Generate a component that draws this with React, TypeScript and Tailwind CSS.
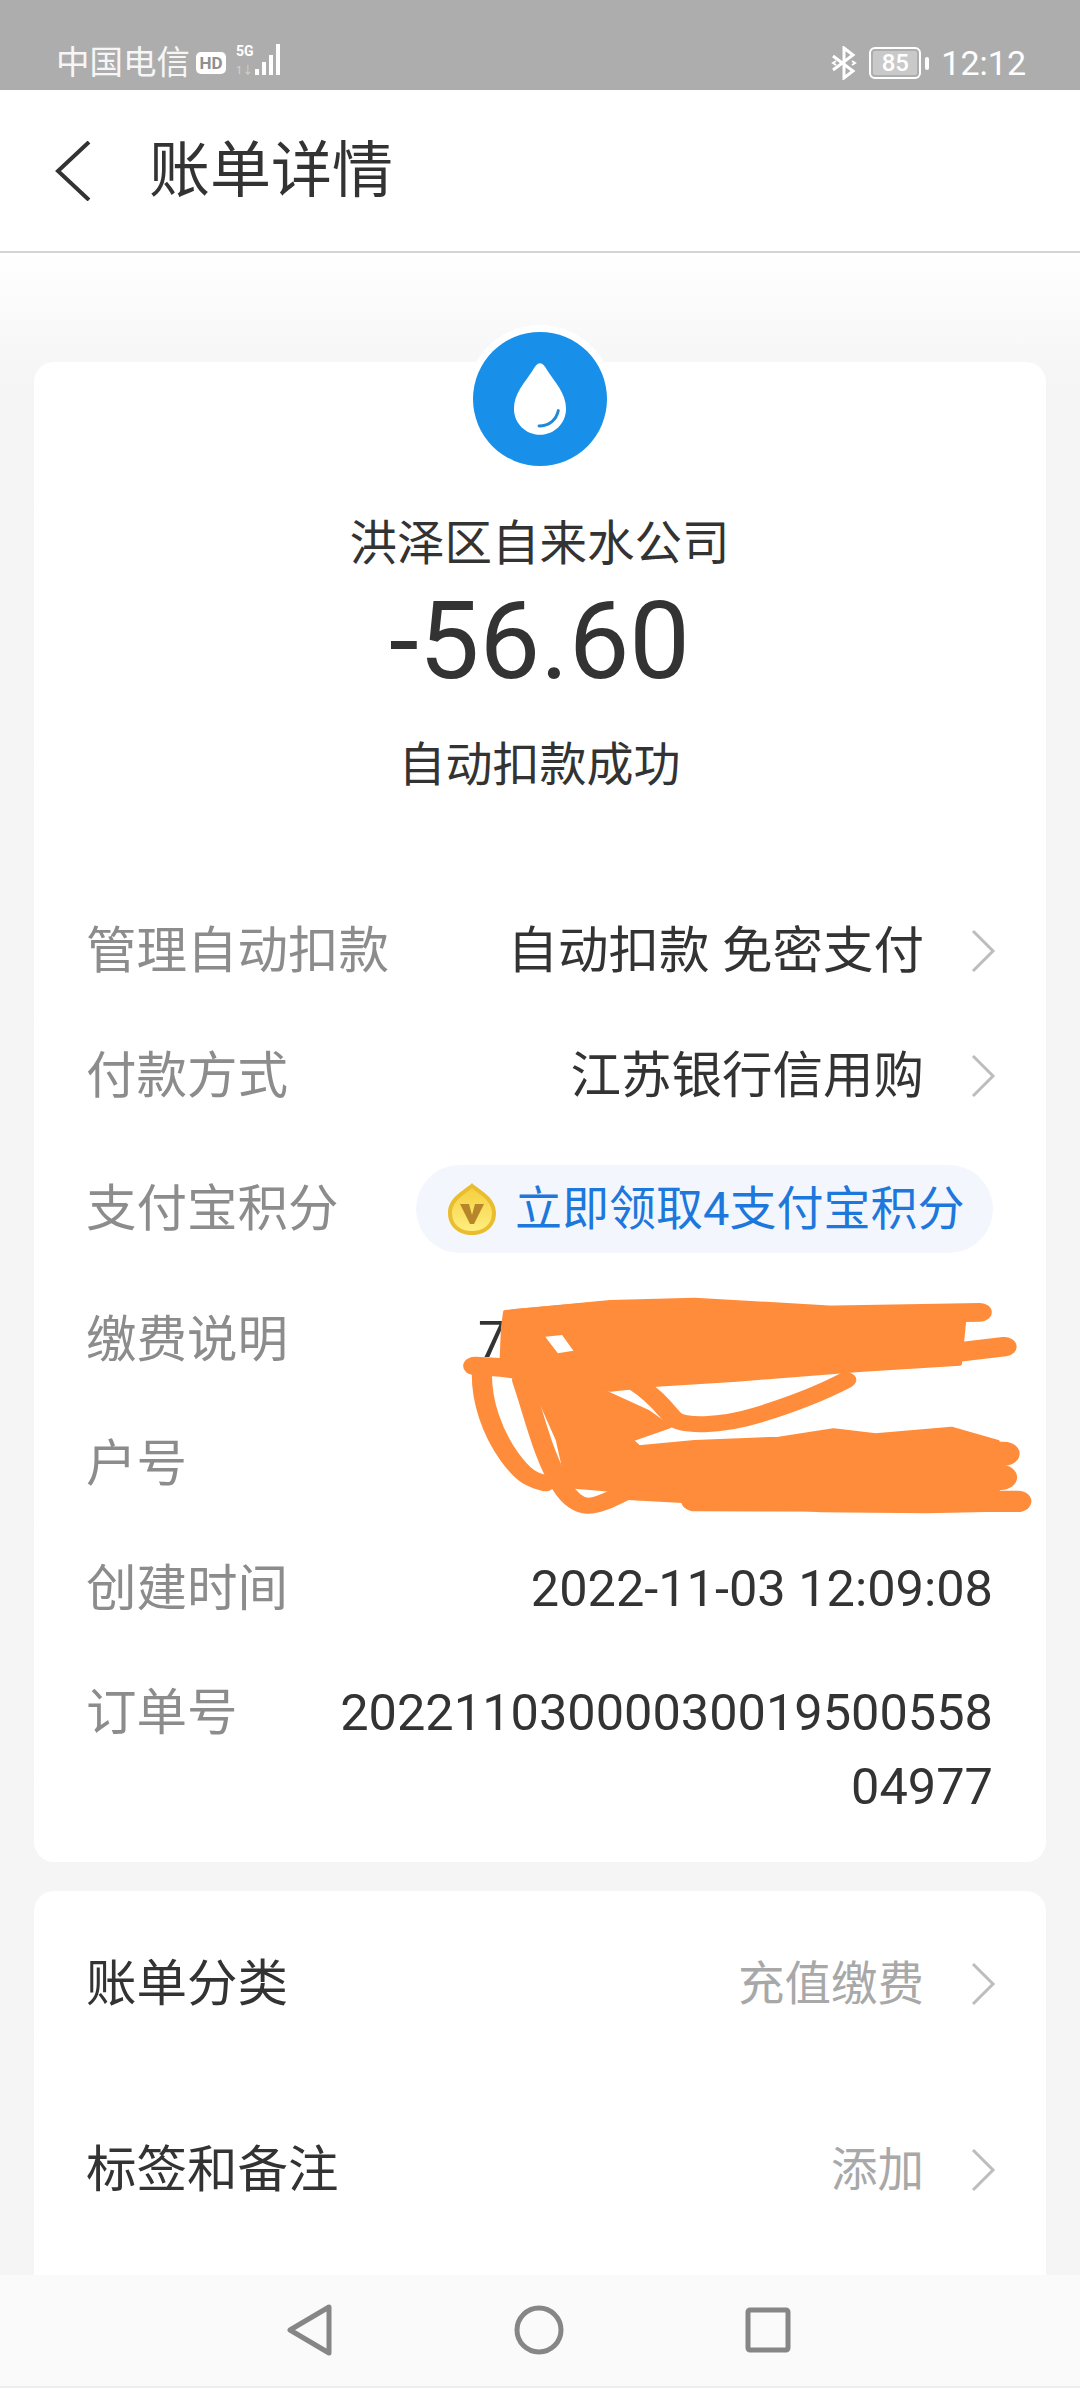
import type { ReactNode } from 'react';

function Chevron() {
  return (
    <svg className="ml-[46px] w-[26px] h-[44px] shrink-0" viewBox="0 0 26 44" fill="none" stroke="#bdbdbd" strokeWidth={3}>
      <path d="M3 2l20 20L3 42" />
    </svg>
  );
}

function Row({ label, height, children }: { label: string; height: string; children?: ReactNode }) {
  return (
    <div className={`flex items-center justify-between ${height}`}>
      <span className="text-[50.5px] leading-[60px] text-[#8c8c8c] shrink-0">{label}</span>
      {children}
    </div>
  );
}

function StatusBar() {
  return (
    <div className="h-[90px] bg-[#adadad] flex items-center justify-between pt-[36px] pl-[56px] pr-[54px] text-white">
      <div className="flex items-center">
        <span className="text-[33.5px] leading-[40px] opacity-90">中国电信</span>
        <span className="ml-[6px] w-[30px] h-[22px] rounded-[5px] bg-white text-[#8f8f8f] text-[17px] leading-[22px] font-bold text-center">HD</span>
        <svg className="ml-[10px] -mt-[6px]" width="50" height="34" viewBox="0 0 50 34" fill="white">
          <text x="0" y="13" fontSize="14" fontWeight="700">5G</text>
          <text x="0" y="31" fontSize="11" opacity="0.45">1↓</text>
          <rect x="19" y="26" width="4" height="6" />
          <rect x="26" y="19" width="4" height="13" />
          <rect x="33" y="12" width="4" height="20" />
          <rect x="40" y="1" width="4" height="31" />
        </svg>
      </div>
      <div className="flex items-center">
        <svg width="26" height="34" viewBox="0 0 26 34" fill="none" stroke="white" strokeWidth={3}>
          <path d="M2 10l20 15-9 7V2l9 7L2 24" />
          <path d="M21 15l3 2-3 2M5 15l-3 2 3 2" strokeWidth={2} />
        </svg>
        <div className="ml-[12px] w-[52px] h-[32px] rounded-[6px] border-2 border-white p-[2px] flex">
          <div className="flex-1 rounded-[2px] bg-[#c9c9c9] text-[24px] leading-[24px] font-medium text-center text-white">85</div>
        </div>
        <div className="ml-[4px] w-[4px] h-[13px] rounded-[2px] bg-white" />
        <span className="ml-[12px] text-[34px] leading-[40px]">12:12</span>
      </div>
    </div>
  );
}

function Coin() {
  return (
    <svg className="shrink-0" width="50" height="54" viewBox="0 0 50 54">
      <defs>
        <linearGradient id="coinFill" x1="0" y1="0" x2="0" y2="1">
          <stop offset="0%" stopColor="#f5cf3f" />
          <stop offset="100%" stopColor="#ffee80" />
        </linearGradient>
      </defs>
      <path d="M25 1C20 7 1 14 1 31c0 14 11 22 24 22s24-8 24-22C49 14 30 7 25 1z" fill="#eabd2e" />
      <path d="M25 6C20 11 5 18 5 31c0 12 9 18 20 18s20-6 20-18C45 18 30 11 25 6z" fill="url(#coinFill)" />
      <path d="M13 22h9l3 11 3-11h9l-10 20h-4z" fill="#b8862a" />
    </svg>
  );
}

// orange scribble over the account details, coords follow the 660x400 crop squeezed to 1568x1200
function Redaction() {
  return (
    <svg
      className="absolute left-[400px] top-[1140px] w-[660px] h-[400px]"
      viewBox="0 0 1568 1200"
      preserveAspectRatio="none"
      fill="#ff8c3a"
      stroke="#ff8c3a"
      strokeLinecap="round"
      strokeLinejoin="round"
    >
      <path strokeWidth={10} d="M250 515L500 485 700 478 1000 500 1340 545 1330 672 1100 690 800 720 610 735 500 750 240 705 245 560z" />
      <path fill="none" strokeWidth={56} d="M275 535L500 510 1000 525 1378 517" />
      <path fill="none" strokeWidth={58} d="M1000 650L1300 640 1436 620" />
      <path fill="none" strokeWidth={56} d="M178 678L600 705" />
      <path fill="none" strokeWidth={48} d="M195 680C190 780 220 880 260 950S320 1020 345 1030" />
      <path fill="none" strokeWidth={48} d="M290 720C320 830 340 950 385 1040S470 1095 530 1060" />
      <path fill="none" strokeWidth={48} d="M560 730C610 770 630 810 650 835S760 860 850 825 1000 760 1060 720" />
      <path strokeWidth={10} d="M300 700L460 740 590 815 640 860 550 900 600 960 560 1060 500 1050 400 1040 375 900 340 800z" />
      <path strokeWidth={10} d="M530 925L700 905 900 895 1030 870 1130 885 1310 865 1420 905 1420 1110 1250 1115 1000 1112 760 1090 540 1075 500 1040z" />
      <path fill="none" strokeWidth={72} d="M1000 940L1436 941" />
      <path fill="none" strokeWidth={76} d="M1000 1012L1428 1012" />
      <path fill="none" strokeWidth={64} d="M700 1082L1468 1084" />
      <path fill="#ffffff" stroke="none" d="M345 590L385 585 412 632 375 640z" />
    </svg>
  );
}

export default function App() {
  return (
    <div className="relative h-[2388px] overflow-hidden flex flex-col bg-[#f5f5f6] text-[#333333] font-[Roboto,'Noto_Sans_CJK_SC',sans-serif]">
      <StatusBar />

      <header className="h-[163px] shrink-0 bg-white border-b-2 border-[#d4d4d4] flex items-center pl-[55px]">
        <svg width="36" height="60" viewBox="0 0 36 60" fill="none" stroke="#333333" strokeWidth={4}>
          <path d="M34 1L3 30l31 29" />
        </svg>
        <h1 className="ml-[58px] text-[61px] leading-[70px] font-normal">账单详情</h1>
      </header>

      <main className="flex-1 min-h-0 overflow-hidden bg-gradient-to-b from-white to-[#f5f5f6] to-[130px] px-[34px] pt-[109px]">
        <section className="bg-white rounded-[20px] pl-[52px] pr-[53px] pb-[38px]">
          <div className="flex flex-col items-center">
            <div className="-mt-[37px] w-[148px] h-[148px] rounded-full bg-white flex items-center justify-center">
              <div className="w-[134px] h-[134px] rounded-full bg-[#1890e9] flex items-center justify-center">
                <svg width="54" height="74" viewBox="0 0 56 76">
                  <path d="M28 1c3 0 5 3 8 8 7 11 19 23 19 39 0 15-12 27-27 27S1 63 1 48C1 32 13 20 20 9c3-5 5-8 8-8z" fill="white" />
                  <path d="M27 66c11 0 18-7 20-16" fill="none" stroke="#1f88d8" strokeWidth={3} strokeLinecap="round" />
                </svg>
              </div>
            </div>
            <div className="mt-[41px] text-[47.5px] leading-[60px]">洪泽区自来水公司</div>
            <div className="mt-[12px] text-[108px] leading-[110px]">-56.60</div>
            <div className="mt-[39px] text-[47px] leading-[60px]">自动扣款成功</div>
          </div>

          <div className="mt-[94px]">
            <Row label="管理自动扣款" height="h-[124px]">
              <span className="flex items-center text-[50.5px] leading-[60px] whitespace-pre -mr-[3px]">
                自动扣款 免密支付
                <Chevron />
              </span>
            </Row>
            <Row label="付款方式" height="h-[125px]">
              <span className="flex items-center text-[50.5px] leading-[60px] -mr-[3px]">
                江苏银行信用购
                <Chevron />
              </span>
            </Row>
            <Row label="支付宝积分" height="h-[141px]">
              <span className="flex items-center h-[88px] w-[577px] rounded-full bg-[#f3f7fd] pl-[31px] text-[#1e78dc] text-[47px] leading-[60px] whitespace-nowrap">
                <Coin />
                <span className="ml-[18px]">立即领取4支付宝积分</span>
              </span>
            </Row>
            <Row label="缴费说明" height="h-[122px]">
              <span className="w-[515px] text-[50.5px] leading-[60px]">7</span>
            </Row>
            <Row label="户号" height="h-[125px]">
              <span className="w-[410px] text-[50.5px] leading-[60px]">7</span>
            </Row>
            <Row label="创建时间" height="h-[125px]">
              <span className="text-[50.5px] leading-[60px]">2022-11-03 12:09:08</span>
            </Row>
            <div className="flex justify-between pt-[25px]">
              <span className="text-[50.5px] leading-[74px] text-[#8c8c8c]">订单号</span>
              <span className="w-[660px] text-right break-all text-[50.5px] leading-[74px]">2022110300003001950055804977</span>
            </div>
          </div>
        </section>

        <section className="mt-[33px] bg-white rounded-[20px] pl-[52px] pr-[50px] h-[500px]">
          {[
            ['账单分类', '充值缴费'],
            ['标签和备注', '添加'],
          ].map(([label, value], i) => (
            <div key={label} className={`flex items-center justify-between h-[186px] text-[50.5px] ${i === 0 ? '-mt-[4px]' : ''}`}>
              <span>{label}</span>
              <span className="flex items-center text-[46.5px] leading-[60px] text-[#a8a8a8]">
                {value}
                <Chevron />
              </span>
            </div>
          ))}
        </section>
      </main>

      <Redaction />

      <nav className="h-[113px] shrink-0 bg-[#fafafa] border-b-2 border-[#eeeeee] flex items-center justify-between pb-[2px] pl-[287px] pr-[289px]">
        <svg width="46" height="52" viewBox="0 0 46 52" fill="none" stroke="#868686" strokeWidth={5} strokeLinejoin="round">
          <path d="M42 3v46L3 26z" />
        </svg>
        <svg width="50" height="50" viewBox="0 0 50 50" fill="none" stroke="#868686" strokeWidth={5}>
          <circle cx="25" cy="25" r="22" />
        </svg>
        <svg width="46" height="46" viewBox="0 0 46 46" fill="none" stroke="#868686" strokeWidth={5} strokeLinejoin="round">
          <rect x="3" y="3" width="40" height="40" rx="2" />
        </svg>
      </nav>
    </div>
  );
}
